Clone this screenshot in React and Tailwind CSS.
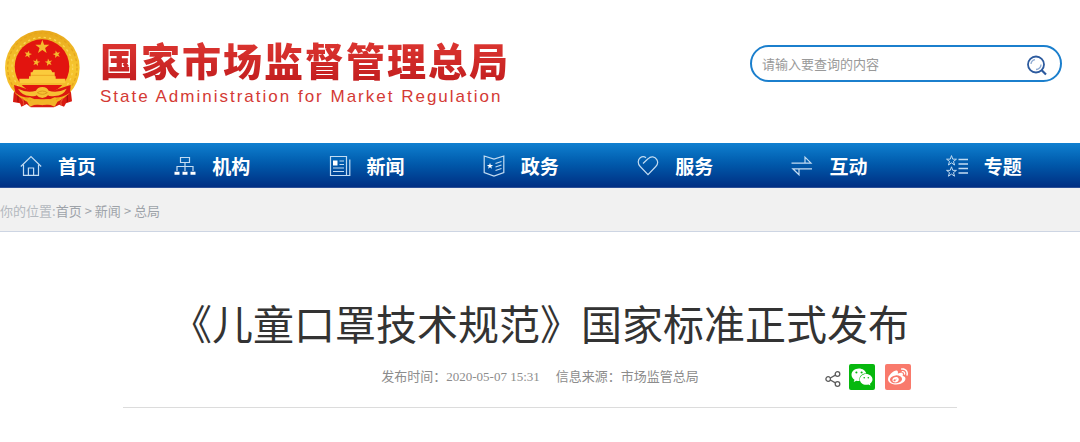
import React from 'react'
import { FaWeibo, FaWeixin } from 'react-icons/fa'

const STAR = 'M0 -10 L2.4 -3.2 L9.5 -3.1 L3.8 1.2 L5.9 8.1 L0 4 L-5.9 8.1 L-3.8 1.2 L-9.5 -3.1 L-2.4 -3.2 Z'

function Emblem() {
  return (
    <svg className="h-[78px] w-[76px] shrink-0" viewBox="12 16 228 234" aria-hidden="true">
      <defs>
        <linearGradient id="gold" x1="0" y1="0" x2="0" y2="1">
          <stop offset="0" stopColor="#e8a81c" />
          <stop offset="0.5" stopColor="#f6c62f" />
          <stop offset="1" stopColor="#f3b01f" />
        </linearGradient>
      </defs>
      <path d="M46 178 Q40 208 39 232 L60 236 L64 246 L80 238 L92 248 L162 248 L178 240 L192 246 L198 236 L216 230 Q214 204 208 178 Z" fill="#d81a12" />
      <path d="M54 196 V232 M72 212 V238 M184 212 V238 M202 196 V232" stroke="#a81008" strokeWidth="4" fill="none" />
      <circle cx="127" cy="129" r="112" fill="url(#gold)" />
      <circle cx="127" cy="129" r="104" fill="none" stroke="#e5a51c" strokeWidth="4" strokeDasharray="9 7" />
      <circle cx="127" cy="129" r="91" fill="none" stroke="#fbd455" strokeWidth="4" strokeDasharray="7 9" />
      <circle cx="126" cy="126" r="82" fill="#e2140f" />
      <g fill="#f5b92e">
        <path d={STAR} transform="translate(127 67) scale(2.2)" />
        <path d={STAR} transform="translate(84 89) rotate(15) scale(1.2)" />
        <path d={STAR} transform="translate(170 89) rotate(-15) scale(1.2)" />
        <path d={STAR} transform="translate(109 113) rotate(10) scale(1.2)" />
        <path d={STAR} transform="translate(146 113) rotate(-10) scale(1.2)" />
      </g>
      <path d="M101 135 H153 L157 143 H164 V155 H167 V162 H196 V181 H58 V162 H87 V155 H92 V143 H97 Z" fill="#fbcb3c" />
      <path d="M94 152 H162" stroke="#e59a18" strokeWidth="2" />
      <path d="M58 178 H196" stroke="#e59a18" strokeWidth="2" />
      <path d="M42 181 Q74 190 92 198 L104 190 H150 L162 198 Q180 190 212 181 L210 204 Q186 220 164 218 L150 224 H104 L90 218 Q66 220 46 204 Z" fill="#dc1710" />
      <path d="M54 192 Q82 206 108 198 Q112 188 127 187 Q142 188 146 198 Q172 206 200 192 Q190 213 164 214 Q148 216 144 212 Q138 220 127 220 Q116 220 110 212 Q106 216 90 214 Q66 213 54 192 Z" fill="#f7c033" />
      <path d="M112 204 Q127 194 142 204 Q127 214 112 204 Z" fill="none" stroke="#dc9a1c" strokeWidth="3" />
      <path d="M82 232 Q104 218 127 228 Q150 218 172 232 L164 246 Q144 236 127 242 Q110 236 90 246 Z" fill="#f2b428" />
      <path d="M66 222 Q74 232 70 242 M188 222 Q180 232 184 242" stroke="#ee4a2c" strokeWidth="4" fill="none" />
    </svg>
  )
}

function NavIcon({ children }) {
  return (
    <svg
      className="h-[22px] w-[22px] shrink-0 text-[#c3dcf2]"
      viewBox="0 0 22 22"
      fill="none"
      stroke="currentColor"
      strokeWidth="1.2"
      aria-hidden="true"
    >
      {children}
    </svg>
  )
}

function HomeIcon() {
  return (
    <NavIcon>
      <path d="M0.8 11.5 L11 1.5 L21.2 11.5" />
      <path d="M3.5 9.5 V20.4 H18.5 V9.5" />
      <path d="M8.4 20.4 V13 H13.6 V20.4" />
    </NavIcon>
  )
}

function OrgIcon() {
  return (
    <NavIcon>
      <path d="M6.5 2.5 H15.5 V7.5 H6.5 Z" />
      <path d="M11 7.5 V16 M3 16 V11.5 H19 V16" />
      <path d="M0.5 18.2 H5.5 M8.5 18.2 H13.5 M16.5 18.2 H21.5" stroke="#ffffff" strokeWidth="3" />
    </NavIcon>
  )
}

function NewsIcon() {
  return (
    <NavIcon>
      <path d="M1.5 1.5 H17.5 V20.5 H1.5 Z" />
      <path d="M17.5 20.5 H20.8 V4.5" />
      <path d="M4 5.5 H8.5 V10.5 H4 Z" fill="#ffffff" stroke="none" />
      <path d="M10.5 6 H15 M10.5 9.5 H15 M4 13 H15 M4 16.5 H15" />
    </NavIcon>
  )
}

function PolicyIcon() {
  return (
    <NavIcon>
      <path d="M1.2 1 L11 4 L20.8 1 V17.5 L11 21 L1.2 17.5 Z" />
      <path d={STAR} transform="translate(7 11) scale(0.33)" fill="#ffffff" stroke="none" />
      <path d="M12.5 8.5 L18.5 6.5 M12.5 12 L18.5 10 M12.5 15.5 L18.5 13.5" />
    </NavIcon>
  )
}

function HeartIcon() {
  return (
    <NavIcon>
      <path d="M6 8.5 L11 3.8 C14 0.8 18 1.6 19.8 4.6 C21.3 7.2 20.8 9.5 18.8 11.5 L11 19.6 L3.2 11.5 C0.4 8.6 0.8 4.8 3.2 2.8 C5 1.3 7.5 1.5 9 2.8" />
    </NavIcon>
  )
}

function ExchangeIcon() {
  return (
    <NavIcon>
      <path d="M0.5 8.2 H20 L14 2.2 V8" />
      <path d="M21 13.8 H1.8 L8 19.8 V14" />
    </NavIcon>
  )
}

function TopicIcon() {
  return (
    <NavIcon>
      <path d={STAR} transform="translate(5.5 5.8) scale(0.52)" strokeWidth="1.9" />
      <path d={STAR} transform="translate(5.5 17) scale(0.52)" strokeWidth="1.9" />
      <path d="M12.5 4.5 H22 M12.5 9 H22 M12.5 13.5 H22 M12.5 18 H22" strokeWidth="1.4" />
    </NavIcon>
  )
}

const navItems = [
  { label: '首页', Icon: HomeIcon },
  { label: '机构', Icon: OrgIcon },
  { label: '新闻', Icon: NewsIcon },
  { label: '政务', Icon: PolicyIcon },
  { label: '服务', Icon: HeartIcon },
  { label: '互动', Icon: ExchangeIcon },
  { label: '专题', Icon: TopicIcon },
]

function Header() {
  return (
    <header className="flex items-start justify-between pt-[30px] pr-[18px] pb-[35px] pl-1">
      <a href="#" className="flex items-center gap-5">
        <Emblem />
        <div className="flex flex-col whitespace-nowrap">
          <span className="bg-linear-to-b from-[#e23a35] to-[#c01a1c] bg-clip-text text-[39px] leading-[56px] font-black tracking-[2px] text-transparent">
            国家市场监督管理总局
          </span>
          <span className="font-['Liberation_Sans'] text-[17px] leading-5 tracking-[2px] text-[#d43a35]">
            State Administration for Market Regulation
          </span>
        </div>
      </a>
      <form
        className="mt-[15px] flex h-[37px] w-[312px] items-center rounded-full border-2 border-[#1b7fcd] pr-3 pl-2.5"
        onSubmit={(e) => e.preventDefault()}
      >
        <input
          type="text"
          aria-label="搜索"
          placeholder="请输入要查询的内容"
          className="min-w-0 flex-1 bg-transparent text-[13px] outline-none placeholder:text-[#999999]"
        />
        <button type="submit" aria-label="查询" className="pt-1">
          <svg className="h-[22px] w-[22px]" viewBox="0 0 22 22" fill="none" stroke="#2c5a9e" aria-hidden="true">
            <circle cx="10" cy="9.5" r="8" strokeWidth="1.8" />
            <path d="M15.5 15 L20 19.5" strokeWidth="2.2" />
            <path d="M5 9 A5 5 0 0 1 9 4.6 M15 9.5 A5 5 0 0 1 10 14.5" stroke="#8fabd2" strokeWidth="1.3" />
          </svg>
        </button>
      </form>
    </header>
  )
}

function Nav() {
  return (
    <nav className="grid h-[45px] grid-cols-7 border-b border-[#2b4f97] bg-linear-to-b from-[#1180d0] to-[#002f83]">
      {navItems.map(({ label, Icon }) => (
        <a key={label} href="#" className="flex items-center gap-4 pt-0.5 pl-5 text-[19px] font-bold text-white">
          <Icon />
          {label}
        </a>
      ))}
    </nav>
  )
}

function Breadcrumb() {
  return (
    <div className="flex h-11 items-center border-b border-[#cdd5e3] bg-[#f1f1f1] pt-0.5 text-[13px] text-[#9ea3a9]">
      <span className="text-[#b4b9bf]">你的位置:</span>
      <a href="#">首页</a>
      <span className="px-[3px]">&gt;</span>
      <a href="#">新闻</a>
      <span className="px-[3px]">&gt;</span>
      <a href="#">总局</a>
    </div>
  )
}

function Article() {
  return (
    <main className="mx-auto max-w-[834px]">
      <h1 className="pt-[59px] text-center text-[41px] leading-[62px] whitespace-nowrap text-[#333333]">
        《儿童口罩技术规范》国家标准正式发布
      </h1>
      <div className="grid grid-cols-[1fr_auto_1fr] items-center border-b border-[#dcdcdc] pt-[11px] pb-[17px]">
        <p className="col-start-2 flex gap-4 font-['Liberation_Serif','Noto_Sans_CJK_SC',serif] text-[13px] text-[#8c8c8c]">
          <span>发布时间：2020-05-07 15:31</span>
          <span>信息来源：市场监管总局</span>
        </p>
        <div className="flex items-center justify-end pr-[46px]">
          <button type="button" aria-label="分享" className="mr-2">
            <svg className="mt-1 h-4 w-4" viewBox="0 0 16 16" fill="none" stroke="#5c5c5c" strokeWidth="1.3" aria-hidden="true">
              <circle cx="3.2" cy="8" r="2.3" />
              <circle cx="12.5" cy="3" r="2.3" />
              <circle cx="12.5" cy="13" r="2.3" />
              <path d="M5.3 7 L10.4 4.1 M5.3 9 L10.4 11.9" />
            </svg>
          </button>
          <button
            type="button"
            aria-label="微信"
            className="mr-2.5 flex h-[26px] w-[26px] items-center justify-center rounded-xs bg-[#07b80e] text-white"
          >
            <FaWeixin className="h-[22px] w-[22px]" />
          </button>
          <button
            type="button"
            aria-label="微博"
            className="flex h-[26px] w-[26px] items-center justify-center rounded-xs bg-[#f97a6c] text-white"
          >
            <FaWeibo className="h-5 w-5" />
          </button>
        </div>
      </div>
    </main>
  )
}

function App() {
  return (
    <div lang="zh-CN" className="min-h-screen bg-white font-['Noto_Sans_CJK_SC',sans-serif]">
      <Header />
      <Nav />
      <Breadcrumb />
      <Article />
    </div>
  )
}

export default App
